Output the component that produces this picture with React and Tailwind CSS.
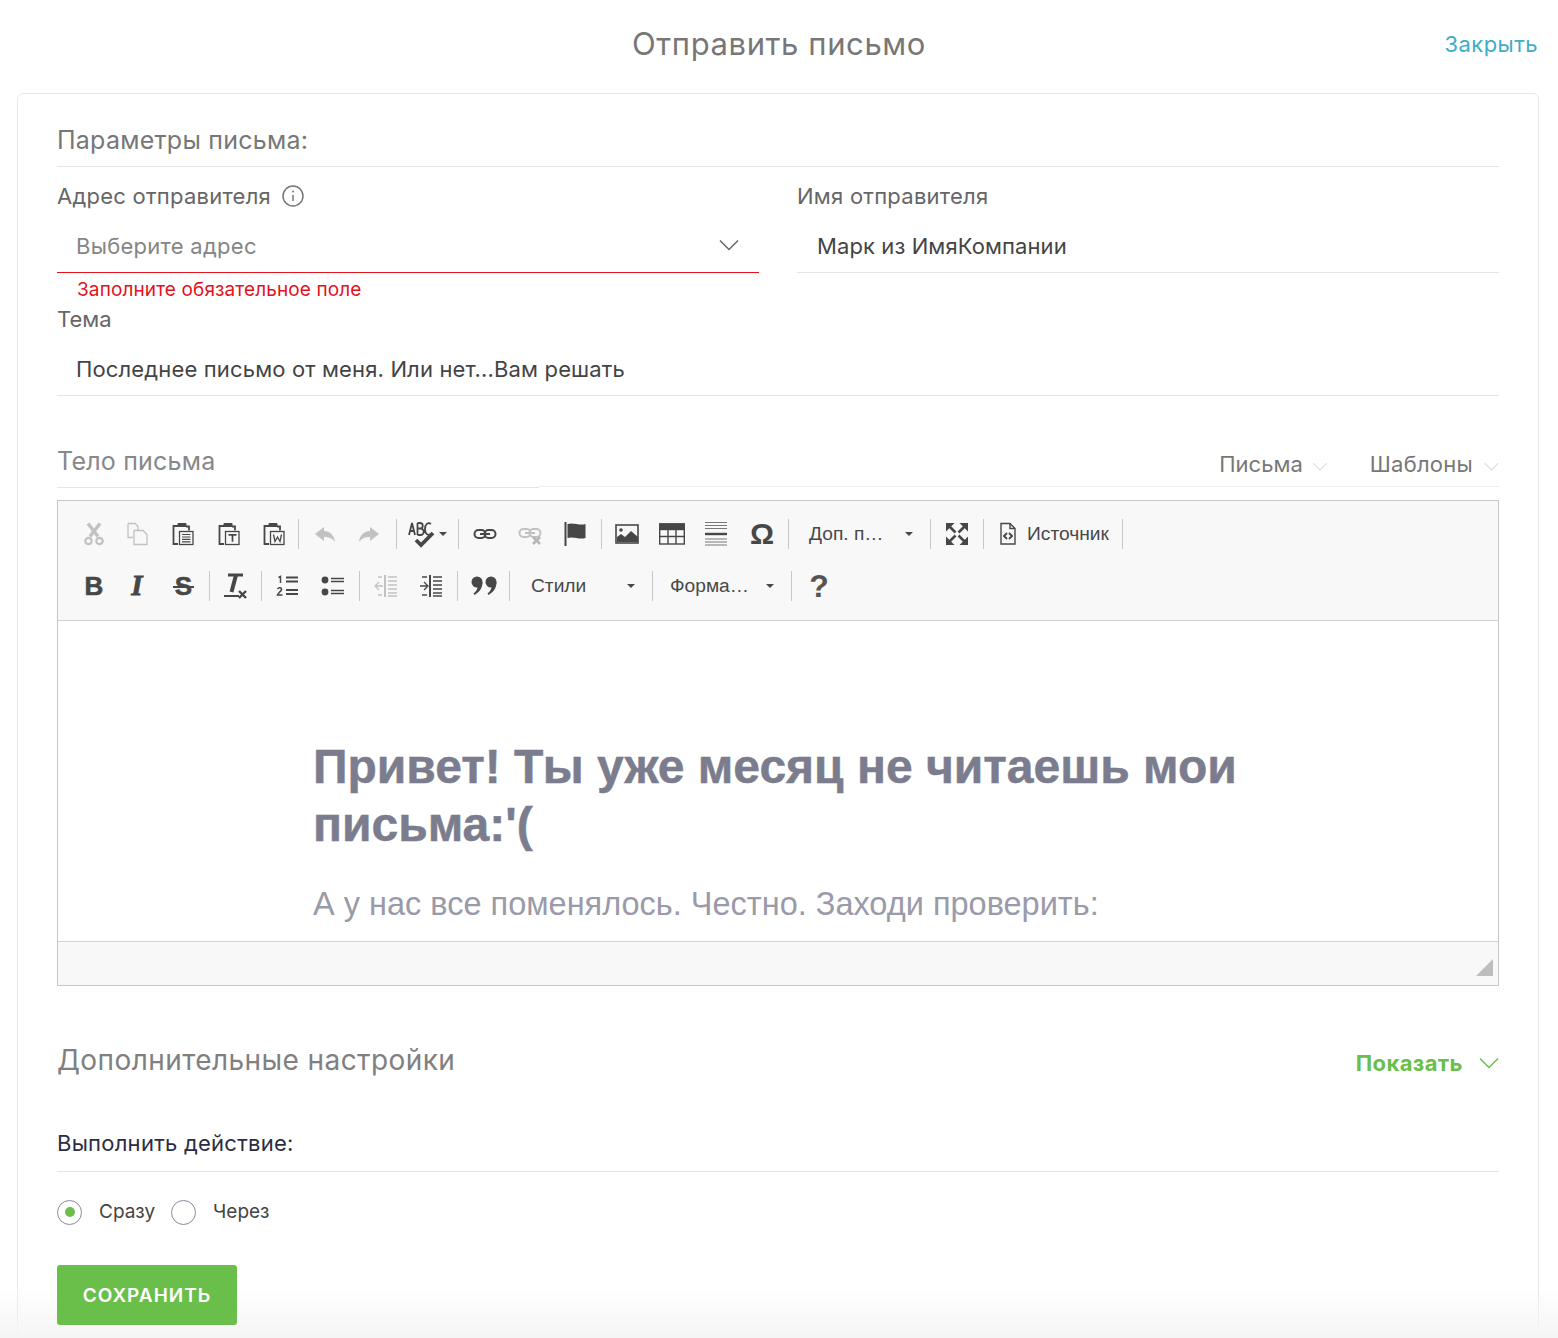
const Chevron = ({ className }) => (
  <svg viewBox="0 0 20 12" fill="none" stroke="currentColor" strokeWidth="1.5" className={className}>
    <path d="M1 1.500l9 9 9-9" />
  </svg>
);

const Sep = ({ className = "" }) => <div className={`w-px h-[30px] bg-[#c8c8c8] shrink-0 ${className}`} />;

const Caret = () => <div className="w-0 h-0 border-x-[4px] border-x-transparent border-t-[4px] border-t-[#474747]" />;

const I = ({ children, dim }) => (
  <svg viewBox="0 0 24 24" className={`w-[24px] h-[24px] ${dim ? "opacity-30" : ""}`} fill="none" stroke="#474747" strokeWidth="1.5">
    {children}
  </svg>
);

const Cell = ({ className, children }) => (
  <div className={`flex items-center justify-center shrink-0 h-[30px] ${className}`}>{children}</div>
);

const Clip = ({ children }) => (
  <I>
    <path d="M7 4H2.500v18H7" strokeWidth="1.800" />
    <path d="M15 4.500h3v4" strokeWidth="1.800" />
    <rect x="6.500" y="1" width="9" height="4" rx="1" fill="#474747" stroke="none" />
    <rect x="8.500" y="9.500" width="13.500" height="13" strokeWidth="1.300" />
    {children}
  </I>
);

function Row1() {
  return (
    <div className="flex items-center h-[30px]">
      <Cell className="w-[44px]">
        <I dim>
          <path d="M6 1.500l10 13M18 1.500L8 14.500" strokeWidth="3.400" />
          <circle cx="6.500" cy="19" r="3.200" strokeWidth="2.200" />
          <circle cx="17.500" cy="19" r="3.200" strokeWidth="2.200" />
        </I>
      </Cell>
      <Cell className="w-[43px]">
        <I dim>
          <path d="M2 1.500h7l3 3v4M2 1.500v14h5" strokeWidth="1.300" />
          <path d="M8 8.500h9l4 4v10H8z" strokeWidth="1.300" />
        </I>
      </Cell>
      <Cell className="w-[47px]">
        <Clip>
          <path d="M11 12.500h8.500M11 15h8.500M11 17.300h8.500M11 19.800h8.500" strokeWidth="1.200" />
        </Clip>
      </Cell>
      <Cell className="w-[46px]">
        <Clip>
          <path d="M11.500 12.800h8M15.500 12.800v7" strokeWidth="1.700" />
        </Clip>
      </Cell>
      <Cell className="w-[43px]">
        <Clip>
          <path d="M11.500 12.500l1.500 7 2.500-4.500 2.500 4.500 1.500-7" strokeWidth="1.300" />
        </Clip>
      </Cell>
      <Sep className="ml-[3px]" />
      <Cell className="w-[52px]">
        <I dim>
          <path d="M11 5L2 12l9 7v-4c5 0 8 1 11 5-1-7-5-11-11-11z" fill="#474747" stroke="none" />
        </I>
      </Cell>
      <Cell className="w-[36px]">
        <I dim>
          <path d="M13 5l9 7-9 7v-4c-5 0-8 1-11 5 1-7 5-11 11-11z" fill="#474747" stroke="none" />
        </I>
      </Cell>
      <Sep className="ml-[9px]" />
      <Cell className="w-[61px] gap-[3px]">
        <svg viewBox="0 0 28 28" className="w-[28px] h-[28px]" fill="none" stroke="#474747">
          <path d="M1 15L4 3l3 12M2 11h4M9.500 3v12M9.500 3h2.500a2.500 2.500 0 010 5.500H9.500h3a2.800 2.800 0 010 6.500h-3M23 4c-3-2-6 0-6 5s3 7 6 5" strokeWidth="1.800" />
          <path d="M8 20l5 5 12-12" strokeWidth="3.800" />
        </svg>
        <Caret />
      </Cell>
      <Sep />
      <Cell className="w-[52px]">
        <I>
          <rect x="1.500" y="8" width="11" height="8" rx="4" strokeWidth="2" />
          <rect x="11.500" y="8" width="11" height="8" rx="4" strokeWidth="2" />
          <path d="M7 12h10" strokeWidth="2" />
        </I>
      </Cell>
      <Cell className="w-[38px]">
        <I dim>
          <rect x="1.500" y="7" width="11" height="8" rx="4" strokeWidth="2" />
          <rect x="11.500" y="7" width="11" height="8" rx="4" strokeWidth="2" />
          <path d="M7 11h10" strokeWidth="2" />
          <path d="M15 15l7 7M22 15l-7 7" strokeWidth="2.500" stroke="#222" />
        </I>
      </Cell>
      <Cell className="w-[52px]">
        <I>
          <path d="M2.500 0v24" strokeWidth="2" />
          <path d="M4.500 2c6-2 12 2 18 0v14c-6 2-12-2-18 0z" fill="#474747" stroke="none" />
        </I>
      </Cell>
      <Sep />
      <Cell className="w-[50px]">
        <I>
          <rect x="1" y="3" width="22" height="18" strokeWidth="1.600" />
          <circle cx="6" cy="8" r="1.800" fill="#474747" stroke="none" />
          <path d="M2 20v-5l4-3 4 3 6-6 7 6v5z" fill="#474747" stroke="none" />
        </I>
      </Cell>
      <Cell className="w-[40px]">
        <svg viewBox="0 0 26 24" className="w-[26px] h-[24px]" fill="none" stroke="#474747" strokeWidth="1.400">
          <rect x="0.700" y="2" width="24.600" height="20" />
          <rect x="0.700" y="2" width="24.600" height="5.500" fill="#474747" />
          <path d="M9 7v15M17 7v15M1 14.500h24" />
        </svg>
      </Cell>
      <Cell className="w-[48px]">
        <I>
          <path d="M1 0.500h22M1 3.500h22M1 6.500h22M1 17h22M1 20h22M1 23h22" strokeWidth="1" stroke="#777" />
          <path d="M1 12h22" strokeWidth="2.400" />
        </I>
      </Cell>
      <Cell className="w-[44px]">
        <span className="font-['Liberation_Sans',sans-serif] font-bold text-[30px] leading-none text-[#474747]">Ω</span>
      </Cell>
      <Sep className="ml-1" />
      <Cell className="w-[141px] pl-[20px] !justify-start text-[19.200px] text-[#484848]">
        <span className="w-[80px] whitespace-nowrap">Доп. п…</span>
        <span className="ml-[16px]">
          <Caret />
        </span>
      </Cell>
      <Sep />
      <Cell className="w-[52px]">
        <I>
          <path d="M1 1h8.500L1 9.500zM23 1h-8.500L23 9.500zM1 23h8.500L1 14.500zM23 23h-8.500L23 14.500z" fill="#474747" stroke="none" />
          <path d="M4 4l6.500 6.500M20 4l-6.500 6.500M4 20l6.500-6.500M20 20l-6.500-6.500" strokeWidth="2.600" />
        </I>
      </Cell>
      <Sep />
      <Cell className="w-[138px] pl-[14px] !justify-start gap-[9px] text-[19.200px] text-[#484848]">
        <svg viewBox="0 0 20 24" className="w-[20px] h-[24px]" fill="none" stroke="#474747" strokeWidth="1.400">
          <path d="M3 1.500h9l5 5V22H3z" />
          <path d="M12 1.500v5h5" />
          <path d="M9 11l-3 3 3 3M11 11l3 3-3 3" strokeWidth="1.900" />
        </svg>
        <span>Источник</span>
      </Cell>
      <Sep />
    </div>
  );
}

function Row2() {
  return (
    <div className="flex items-center h-[34px] mt-[20px]">
      <Cell className="w-[44px]">
        <span className="font-['Liberation_Sans',sans-serif] font-bold text-[26px] text-[#474747] [-webkit-text-stroke:0.6px_#474747]">B</span>
      </Cell>
      <Cell className="w-[42px]">
        <span className="font-['Liberation_Serif',serif] italic font-bold text-[29px] text-[#474747] [-webkit-text-stroke:0.8px_#474747]">I</span>
      </Cell>
      <Cell className="w-[51px] relative">
        <span className="font-['Liberation_Sans',sans-serif] font-bold text-[26px] text-[#474747] [-webkit-text-stroke:0.5px_#474747]">S</span>
        <span className="absolute left-[15px] right-[15px] top-[15px] h-[2px] bg-[#474747]" />
      </Cell>
      <Sep />
      <Cell className="w-[49px]">
        <svg viewBox="0 0 26 28" className="w-[26px] h-[28px]" fill="none" stroke="#474747">
          <path d="M6 3h15" strokeWidth="3" />
          <path d="M14 3L9.500 20" strokeWidth="4" />
          <path d="M2 24h15" strokeWidth="2" />
          <path d="M17 19l7 7M24 19l-7 7" strokeWidth="2.400" />
        </svg>
      </Cell>
      <Sep className="ml-[2px]" />
      <Cell className="w-[52px]">
        <I>
          <path d="M10 3.500h12M10 7.500h12M10 16h12M10 20h12" strokeWidth="1.800" />
          <path d="M2.500 3.500l2-1V9M1.500 15c1-2 4.500-1.500 4 .5S2 19 1.500 21h5" strokeWidth="1.500" />
        </I>
      </Cell>
      <Cell className="w-[38px]">
        <I>
          <circle cx="4" cy="6" r="3.400" fill="#474747" stroke="none" />
          <circle cx="4" cy="18" r="3.400" fill="#474747" stroke="none" />
          <path d="M10 4.500h13M10 7.500h13M10 16.500h13M10 19.500h13" strokeWidth="1.700" />
        </I>
      </Cell>
      <Sep className="ml-[7px]" />
      <Cell className="w-[52px]">
        <I dim>
          <path d="M11 1v22" strokeWidth="2" />
          <path d="M14 3h9M14 7h9M14 11h9M14 15h9M14 19h9M14 22h9M2 12h7M5 8l-4 4 4 4M4 3h4M4 21h4" strokeWidth="1.300" />
        </I>
      </Cell>
      <Cell className="w-[38px]">
        <I>
          <path d="M11 1v22" strokeWidth="2" />
          <path d="M14 3h9M14 7h9M14 11h9M14 15h9M14 19h9M14 22h9M1 12h7M5 8l4 4-4 4M3 3h5M3 21h5" strokeWidth="1.300" />
        </I>
      </Cell>
      <Sep className="ml-[7px]" />
      <Cell className="w-[51px]">
        <svg viewBox="0 0 26 20" className="w-[26px] h-[20px]" fill="#474747">
          <circle cx="6" cy="6" r="5.500" />
          <path d="M11.500 6c0 6-3 10-8 13l-1-1.500c3-2 4-5 4-7z" />
          <circle cx="20" cy="6" r="5.500" />
          <path d="M25.500 6c0 6-3 10-8 13l-1-1.500c3-2 4-5 4-7z" />
        </svg>
      </Cell>
      <Sep />
      <Cell className="w-[142px] pl-[21px] !justify-start text-[19.200px] text-[#484848]">
        <span className="w-[96px]">Стили</span>
        <Caret />
      </Cell>
      <Sep />
      <Cell className="w-[138px] pl-[17px] !justify-start text-[19.200px] text-[#484848]">
        <span className="w-[96px] whitespace-nowrap">Форма…</span>
        <Caret />
      </Cell>
      <Sep />
      <Cell className="w-[54px]">
        <span className="font-['Liberation_Sans',sans-serif] font-bold text-[32px] text-[#555555]">?</span>
      </Cell>
    </div>
  );
}

export default function App() {
  return (
    <div className="relative w-[1558px] h-[1338px] overflow-hidden bg-white font-['Inter',sans-serif]">
      <header className="relative h-[93px] flex items-center justify-center pb-[4px]">
        <h1 className="text-[31px] text-[#777777] tracking-[0.6px]">Отправить письмо</h1>
        <a className="absolute right-[20px] top-[30px] text-[22px] leading-[28px] text-[#41acc9] tracking-[0.45px]">Закрыть</a>
      </header>

      <main className="mx-[17px] w-[1522px] h-[1300px] border border-[#e8e8e8] rounded-[6px] px-[39px] pt-[27px]">
        <div className="h-[46px] border-b border-[#e5e5e5] text-[25px] leading-[38px] text-[#777777] tracking-[0.25px]">Параметры письма:</div>

        <div className="flex gap-[38px]">
          <div className="w-[702px]">
            <label className="h-[44px] flex items-center gap-[11px] pt-[14px] text-[22px] text-[#666666] tracking-[0.25px]">
              Адрес отправителя
              <svg viewBox="0 0 22 22" className="w-[22px] h-[22px]" fill="none" stroke="#777777" strokeWidth="1.500">
                <circle cx="11" cy="11" r="10" />
                <path d="M11 10v6" />
                <circle cx="11" cy="6.500" r="1" fill="#777777" stroke="none" />
              </svg>
            </label>
            <div className="h-[62px] border-b border-[#e2111c] flex items-center justify-between pl-[19px] pr-[20px] pt-[9px]">
              <span className="text-[22px] text-[#858585] tracking-[0.28px]">Выберите адрес</span>
              <Chevron className="w-[20px] h-[12px] text-[#666666] -translate-y-px" />
            </div>
          </div>
          <div className="w-[702px]">
            <label className="h-[44px] flex items-center pt-[14px] text-[22px] text-[#666666] tracking-[0.25px]">Имя отправителя</label>
            <div className="h-[62px] border-b border-[#e5e5e5] flex items-center pl-[20px] pt-[9px]">
              <span className="text-[22px] text-[#444444] tracking-[0.1px]">Марк из ИмяКомпании</span>
            </div>
          </div>
        </div>

        <div className="h-[33px] pl-[20px] flex items-center text-[19px] text-[#e2111c] pt-[2px] tracking-[0.12px]">Заполните обязательное поле</div>

        <label className="block h-[30px] text-[22px] leading-[26px] text-[#666666]">Тема</label>
        <div className="h-[60px] border-b border-[#e5e5e5] flex items-center pl-[19px] pt-[8px] text-[22px] text-[#444444] tracking-[0.15px]">
          Последнее письмо от меня. Или нет...Вам решать
        </div>

        <div className="mt-[44px] h-[48px] flex items-start relative">
          <div className="w-[482px] h-[48px] border-b border-[#e5e5e5] text-[25px] leading-[42px] text-[#888888] tracking-[0.2px]">Тело письма</div>
          <div className="flex-1 h-[47px] border-b border-[#eeeeee] flex justify-end items-start pt-[9px]">
            <span className="text-[22px] leading-[30px] text-[#777777]">Письма</span>
            <Chevron className="w-[16px] h-[9px] mt-[13px] ml-[9px] text-[#dddddd]" />
            <span className="ml-[42px] text-[22px] leading-[30px] text-[#777777] tracking-[0.25px]">Шаблоны</span>
            <Chevron className="w-[15px] h-[9px] mt-[13px] ml-[11px] text-[#dddddd]" />
          </div>
        </div>

        <div className="mt-[12px] h-[486px] border border-[#c8c8c8] flex flex-col font-['Liberation_Sans',sans-serif]">
          <div className="h-[120px] bg-[#f8f8f8] border-b border-[#d1d1d1] pl-[14px] pt-[18px] shrink-0">
            <Row1 />
            <Row2 />
          </div>
          <div className="h-[320px] shrink-0 bg-white overflow-hidden pl-[255px] pt-[117px] pr-[200px]">
            <h2 className="text-[48px] leading-[58px] font-bold text-[#7b7c8d] [-webkit-text-stroke:0.5px_#7b7c8d]">Привет! Ты уже месяц не читаешь мои письма:'(</h2>
            <p className="mt-[28px] text-[32.500px] leading-[44px] text-[#9a9aa9]">А у нас все поменялось. Честно. Заходи проверить:</p>
          </div>
          <div className="flex-1 bg-[#f8f8f8] border-t border-[#d1d1d1] flex items-end justify-end pr-[5px] pb-[9px]">
            <div className="w-0 h-0 border-l-[17px] border-l-transparent border-b-[17px] border-b-[#bdbdbd]" />
          </div>
        </div>

        <div className="mt-[52px] h-[50px] flex items-start justify-between">
          <span className="text-[28px] leading-[44px] text-[#808080] tracking-[0.42px]">Дополнительные настройки</span>
          <span className="flex items-center gap-[16px] pt-[8px]">
            <span className="text-[22px] leading-[34px] font-bold text-[#6abf4b] tracking-[0.4px]">Показать</span>
            <Chevron className="w-[20px] h-[12px] text-[#6abf4b]" />
          </span>
        </div>

        <div className="mt-[37px] h-[47px] border-b border-[#e5e5e5] text-[22px] leading-[36px] text-[#2c2c44] tracking-[0.25px]">Выполнить действие:</div>

        <div className="mt-[26px] flex items-center text-[19px] text-[#444444] h-[28px]">
          <span className="w-[25px] h-[25px] rounded-full border border-[#8a8a9a] flex items-center justify-center">
            <span className="w-[10px] h-[10px] rounded-full bg-[#6abf4b]" />
          </span>
          <span className="ml-[17px] w-[56px] pt-[1px] whitespace-nowrap">Сразу</span>
          <span className="ml-[16px] w-[25px] h-[25px] rounded-full border border-[#8a8a9a]" />
          <span className="ml-[17px] pt-[1px]">Через</span>
        </div>

        <button className="relative z-10 mt-[39px] w-[180px] h-[60px] pt-[2px] rounded-[3px] bg-[#6abf4b] text-white font-semibold text-[19px] tracking-[1px]">СОХРАНИТЬ</button>
      </main>

      <div className="absolute left-0 right-0 bottom-0 h-[50px] bg-gradient-to-b from-transparent to-[#f5f5f5] pointer-events-none" />
    </div>
  );
}
